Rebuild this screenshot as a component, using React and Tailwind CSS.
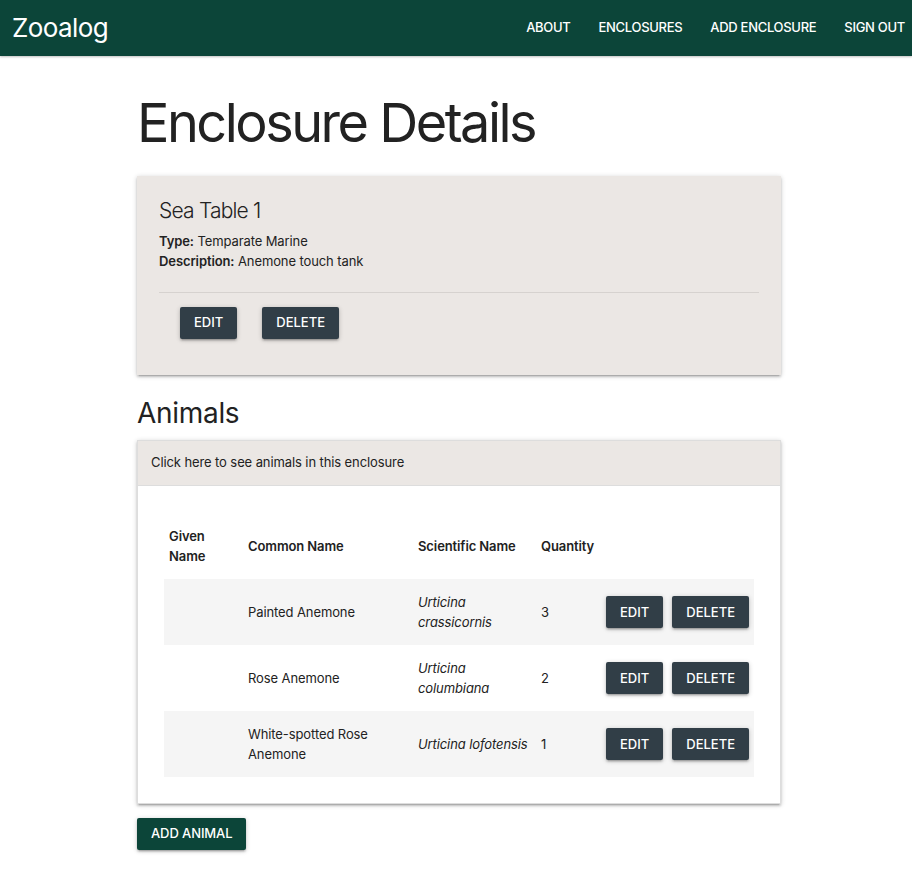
import React from "react";

const animals = [
  { given: "", common: "Painted Anemone", scientific: "Urticina crassicornis", qty: 3 },
  { given: "", common: "Rose Anemone", scientific: "Urticina columbiana", qty: 2 },
  { given: "", common: "White-spotted Rose Anemone", scientific: "Urticina lofotensis", qty: 1 },
];

const shadow =
  "shadow-[0_2px_2px_0_rgba(0,0,0,0.14),0_3px_1px_-2px_rgba(0,0,0,0.12),0_1px_5px_0_rgba(0,0,0,0.2)]";

const DarkButton = ({ children }) => (
  <button
    className={`h-8 px-[14px] rounded-[2px] bg-[#313e47] text-white text-[13px] font-medium tracking-[0px] uppercase ${shadow}`}
  >
    {children}
  </button>
);

const App = () => {
  return (
    <div className="min-h-screen bg-white text-[#222] font-['Inter','Liberation_Sans',sans-serif]">
      {/* Navbar */}
      <nav className="h-14 bg-[#0c4539] flex items-center justify-between pl-3 pr-[7px] shadow-[0_1px_2px_rgba(0,0,0,0.25)]">
        <span className="text-white text-[26px] leading-none tracking-[-0.6px]">Zooalog</span>
        <ul className="flex items-center gap-[28px] text-white text-[13px] font-medium tracking-[-0.3px]">
          <li>ABOUT</li>
          <li>ENCLOSURES</li>
          <li>ADD ENCLOSURE</li>
          <li>SIGN OUT</li>
        </ul>
      </nav>

      <main className="w-[644px] ml-[137px] tracking-[-0.1px]">
        <h1 className="mt-[39px] text-[54px] leading-[56px] tracking-[-2.5px]">Enclosure Details</h1>

        {/* Enclosure card */}
        <div className={`mt-[25px] bg-[#ebe7e4] px-[22px] pt-[21px] pb-[36px] ${shadow}`}>
          <h2 className="text-[21px] leading-[28px] font-light tracking-[-0.8px]">Sea Table 1</h2>
          <div className="mt-[6px] text-[13px] leading-[20px]">
            <p>
              <span className="font-semibold">Type:</span> Temparate Marine
            </p>
            <p>
              <span className="font-semibold">Description:</span> Anemone touch tank
            </p>
          </div>
          <div className="mt-[21px] border-t border-[#d6d2cf]" />
          <div className="mt-[14px] ml-[21px] flex gap-[25px]">
            <DarkButton>Edit</DarkButton>
            <DarkButton>Delete</DarkButton>
          </div>
        </div>

        {/* Animals */}
        <h3 className="mt-[20px] text-[28px] leading-[36px] tracking-[-0.3px]">Animals</h3>
        <div className={`mt-[9px] border border-[#ddd] ${shadow}`}>
          <div className="h-[45px] bg-[#ebe7e4] border-b border-[#ddd] flex items-center px-[13px] text-[13px]">
            Click here to see animals in this enclosure
          </div>
          <div className="bg-white p-[26px]">
            <table className="w-full table-fixed text-[13px] leading-[20px] text-left">
              <colgroup>
                <col className="w-[79px]" />
                <col className="w-[170px]" />
                <col className="w-[123px]" />
                <col className="w-[64px]" />
                <col />
              </colgroup>
              <thead>
                <tr className="h-[67px]">
                  <th className="px-[5px] font-semibold">Given Name</th>
                  <th className="px-[5px] font-semibold">Common Name</th>
                  <th className="px-[5px] font-semibold">Scientific Name</th>
                  <th className="px-[5px] font-semibold">Quantity</th>
                  <th className="px-[5px]" />
                </tr>
              </thead>
              <tbody>
                {animals.map((a, i) => (
                  <tr key={a.common} className={`h-[66px] ${i % 2 === 0 ? "bg-[#f5f5f5]" : "bg-white"}`}>
                    <td className="px-[5px]">{a.given}</td>
                    <td className="px-[5px]">{a.common}</td>
                    <td className="px-[5px] italic">{a.scientific}</td>
                    <td className="px-[5px]">{a.qty}</td>
                    <td className="px-[5px]">
                      <div className="flex justify-end gap-[9px]">
                        <DarkButton>Edit</DarkButton>
                        <DarkButton>Delete</DarkButton>
                      </div>
                    </td>
                  </tr>
                ))}
              </tbody>
            </table>
          </div>
        </div>

        <button
          className={`mt-[14px] mb-6 h-8 px-[14px] rounded-[2px] bg-[#0c4539] text-white text-[13px] font-medium ${shadow}`}
        >
          ADD ANIMAL
        </button>
      </main>
    </div>
  );
};

export default App;
